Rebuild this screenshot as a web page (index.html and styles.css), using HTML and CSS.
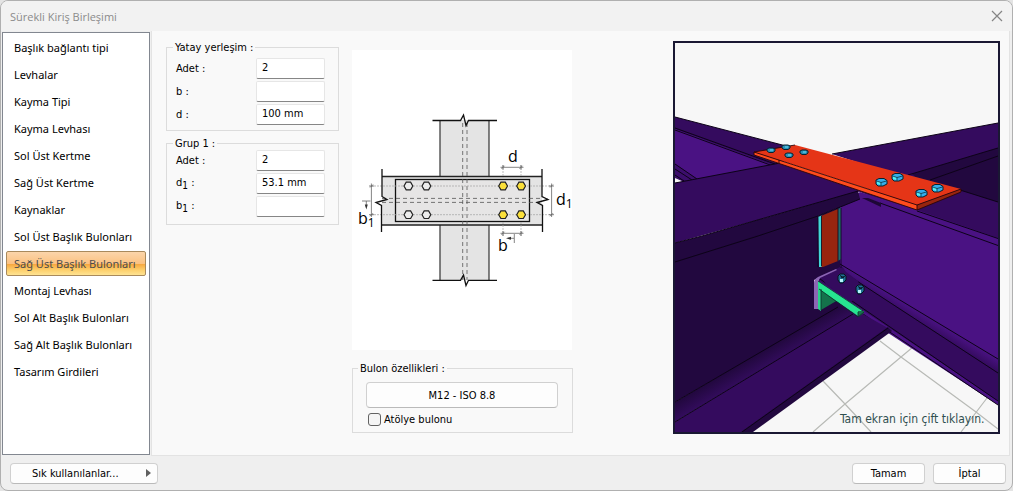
FILE: index.html
```html
<!DOCTYPE html>
<html lang="tr">
<head>
<meta charset="UTF-8" />
<meta name="viewport" content="width=device-width, initial-scale=1" />
<title>Sürekli Kiriş Birleşimi</title>
<link rel="stylesheet" href="styles.css">
</head>
<body>
<div class="dialog">
  <header class="titlebar">
    <h1>Sürekli Kiriş Birleşimi</h1>
    <button type="button" class="close" aria-label="Kapat">
      <svg width="12" height="12" viewBox="0 0 12 12"><path d="M1 1L11 11M11 1L1 11" fill="none" stroke="#858585" stroke-width="1.2"/></svg>
    </button>
  </header>

  <div class="content">
    <nav class="sidebar">
      <button type="button">Başlık bağlantı tipi</button>
      <button type="button">Levhalar</button>
      <button type="button">Kayma Tipi</button>
      <button type="button">Kayma Levhası</button>
      <button type="button">Sol Üst Kertme</button>
      <button type="button">Sağ Üst Kertme</button>
      <button type="button">Kaynaklar</button>
      <button type="button">Sol Üst Başlık Bulonları</button>
      <button type="button" class="active">Sağ Üst Başlık Bulonları</button>
      <button type="button">Montaj Levhası</button>
      <button type="button">Sol Alt Başlık Bulonları</button>
      <button type="button">Sağ Alt Başlık Bulonları</button>
      <button type="button">Tasarım Girdileri</button>
    </nav>

    <main class="panel">
      <form class="fields">
        <fieldset>
          <legend>Yatay yerleşim :</legend>
          <div class="rows">
            <label for="h-count">Adet :</label>
            <input type="text" id="h-count" value="2" />
            <label for="h-b">b :</label>
            <input type="text" id="h-b" value="" />
            <label for="h-d">d :</label>
            <input type="text" id="h-d" value="100 mm" />
          </div>
        </fieldset>
        <fieldset class="tight">
          <legend>Grup 1 :</legend>
          <div class="rows">
            <label for="g-count">Adet :</label>
            <input type="text" id="g-count" value="2" />
            <label for="g-d1">d<sub>1</sub> :</label>
            <input type="text" id="g-d1" value="53.1 mm" />
            <label for="g-b1">b<sub>1</sub> :</label>
            <input type="text" id="g-b1" value="" />
          </div>
        </fieldset>
      </form>

      <div class="middle">
        <svg class="diagram" viewBox="0 0 220 300">
          <!-- column and beam -->
          <rect x="88" y="70" width="49" height="160" fill="#e4e4e4"/>
          <path d="M88 70V230M137 70V230" stroke="#333" stroke-width="1.2"/>
          <rect x="30" y="126" width="160" height="49" fill="#e4e4e4"/>
          <path d="M30 126.5H190M30 175H190" stroke="#222" stroke-width="1.3"/>
          <rect x="43.5" y="129.5" width="134" height="42" fill="#e6e5e5" stroke="#111" stroke-width="1.3"/>
          <!-- hidden edges -->
          <g stroke="#555" stroke-width="0.8" stroke-dasharray="4 3">
            <path d="M110.7 73V230M115 73V230M30 148.4H190M30 152.4H190"/>
          </g>
          <g stroke="#aaa" stroke-width="0.8" stroke-dasharray="2 1">
            <path d="M19 136H200M19 164.7H200M151 115V128M169 115V128M151 172V186M169 172V186"/>
          </g>
          <!-- break lines -->
          <g fill="none" stroke="#111" stroke-width="1.3">
            <path d="M80.5 70.5H108.5L111.5 65L114 75.5L116.5 70.5H145"/>
            <path d="M80.5 230.3H108.5L111.5 225L114 235.5L116.5 230.3H145"/>
            <path d="M30 119V146.5L35 149.5L24 152.5L29.5 155.5V182"/>
            <path d="M190 119V146.5L196 149.5L185 152.5L190.5 155.5V182"/>
          </g>
          <!-- bolts -->
          <g fill="#ededed" stroke="#222" stroke-width="1.2">
            <path id="bolt" d="M52 136L54.2 132.2H58.6L60.8 136L58.6 139.8H54.2Z"/>
            <use href="#bolt" x="18"/>
            <use href="#bolt" y="28.7"/>
            <use href="#bolt" x="18" y="28.7"/>
          </g>
          <g fill="#fbe03a" stroke="#222" stroke-width="1.2">
            <path id="bolt-on" d="M146.7 136L148.9 132.2H153.3L155.5 136L153.3 139.8H148.9Z"/>
            <use href="#bolt-on" x="18"/>
            <use href="#bolt-on" y="28.7"/>
            <use href="#bolt-on" x="18" y="28.7"/>
          </g>
          <!-- dimensions -->
          <g fill="none" stroke="#666" stroke-width="0.8">
            <path d="M148.5 117.3H171.5M151 115V119.5M169 115V119.5M149.5 118.8L152.5 115.8M167.5 118.8L170.5 115.8"/>
            <path d="M148.5 183.3H171.5M151 181V186M169 181V186M149.5 184.8L152.5 181.8M167.5 184.8L170.5 181.8"/>
            <path d="M19.4 133.5V167M17 136H22M17 164.7H22M18 137.5L21 134.5M18 166.2L21 163.2"/>
            <path d="M199.6 133.5V167M197 136H202M197 164.7H202M198 137.5L201 134.5M198 166.2L201 163.2"/>
            <path d="M10 151H18.5M14.3 151V157M162.3 184V193M162 188.3H157"/>
          </g>
          <path d="M12.8 154.5H15.8L14.3 159.5ZM159 186.8V189.8L154 188.3Z" fill="#333"/>
          <text x="156" y="112">d</text>
          <text x="204" y="155">d<tspan class="index" dy="3">1</tspan></text>
          <text x="6" y="174">b<tspan class="index" dy="3">1</tspan></text>
          <text x="146" y="201">b</text>
        </svg>

        <fieldset class="bolt-props">
          <legend>Bulon özellikleri :</legend>
          <button type="button" class="btn wide">M12 - ISO 8.8</button>
          <label class="check"><input type="checkbox" />Atölye bulonu</label>
        </fieldset>
      </div>

      <div class="preview">
        <svg viewBox="675 43 323 389">
          <defs>
            <linearGradient id="fillet-left" gradientUnits="userSpaceOnUse" x1="750" y1="359" x2="760" y2="376">
              <stop offset="0" stop-color="#22083f"/>
              <stop offset="1" stop-color="#370d64"/>
            </linearGradient>
            <linearGradient id="fillet-right" gradientUnits="userSpaceOnUse" x1="932" y1="319" x2="926" y2="329">
              <stop offset="0" stop-color="#4a1283"/>
              <stop offset="1" stop-color="#340b5e"/>
            </linearGradient>
          </defs>
          <rect x="675" y="43" width="323" height="389" fill="#f7f7f7"/>

          <!-- floor grid -->
          <path d="M880 341L901 357L976 412L998 429M823 381L845 404L871 432M913 347L901 357L845 404L813 432M987 398L961 432" fill="none" stroke="#b8bab6" stroke-width="1.2"/>

          <!-- far left beam -->
          <path d="M675 117L790 147L780 170L675 183Z" fill="#340b5e"/>
          <path d="M675 129L773 165L697 179L675 164Z" fill="#4a1283"/>
          <path d="M675 164L697 179L690 181L675 178Z" fill="#3c0e6c"/>
          <path d="M675 178L683 181.5L675 183Z" fill="#f7f7f7"/>
          <path d="M675 117L790 147M675 128L775 164M675 130L773 166M675 164L697 179M675 169L692 180M675 175L684 181" fill="none" stroke="#0d0318"/>

          <!-- far right beam -->
          <path d="M832 154L998 123V150L912 180Z" fill="#340b5e"/>
          <path d="M912 174L998 148V204L930 190Z" fill="#22083f"/>
          <path d="M832 154L998 123M908 175L998 148M930 180L998 156" fill="none" stroke="#0d0318"/>

          <!-- near right beam -->
          <path d="M816 280L850 300L892 331L888 329L835 320Z" fill="#2b094e"/>
          <path d="M855 190L960 190L998 202V240L917 215Z" fill="#340b5e"/>
          <path d="M837 205L860 192L917 210L998 238V375L837 268Z" fill="#4a1283"/>
          <path d="M840 264L998 359V374L837 269Z" fill="url(#fillet-right)"/>
          <path d="M837 268L998 373V402L863 311L818 282L820 276Z" fill="#340b5e"/>
          <path d="M818 280L998 401V405L850 308Z" fill="#4a1283"/>
          <path d="M960 190L998 202M917 211L998 238.5M880 203L998 245.5M840 264L998 359M837 268L998 373M820 279L998 401M863 314L998 405" fill="none" stroke="#0d0318"/>
          <path d="M862 198L881 207V203L868 198Z" fill="#1d0736"/>

          <!-- near left beam -->
          <path d="M675 183L780 163L863 190L858 192L675 243Z" fill="#340b5e"/>
          <path d="M675 243L702 236L858 191L860 199L818 216V232L675 264Z" fill="#22083f"/>
          <path d="M675 262L818 216L840 207V268L814 280V300L840 300V307L675 402Z" fill="#22083f"/>
          <path d="M820 276L838 268L842 266L846 272L858 281L862 296L850 302L826 284Z" fill="#340b5e"/>
          <path d="M675 402L840 305L853 314L675 422Z" fill="url(#fillet-left)"/>
          <path d="M675 422L853 313L861 313L888 328L742 432H675Z" fill="#340b5e"/>
          <path d="M888 327L892 331L753 432H741Z" fill="#22083f"/>
          <path d="M675 183L780 163M675 243L702 236L858 191M675 262L758 236L818 216L860 199M675 402L838 307M675 422L853 314M742 432L888 328" fill="none" stroke="#0d0318"/>

          <!-- web plate -->
          <path d="M821 216L838 209V261L823 267H821Z" fill="#98250f"/>
          <path d="M818 217L821.5 215.5V267H819Z" fill="#42d8d8"/>
          <path d="M838 209L841 207.5V259L838 261Z" fill="#236b6e"/>
          <path d="M821.5 216V266M838 209V261M818 217V267M841 208V268" stroke="#0d0318" stroke-width="0.8"/>

          <!-- seat bracket -->
          <path d="M814 309V283Q814 279 818 277L836 269L837 270L820 278Q818 280 818 283V309Z" fill="#8c66b4"/>
          <path d="M820 284L838 300L821 310Z" fill="#14724b"/>
          <path d="M818 282L821 283V311L818 309Z" fill="#2bd08a"/>
          <path d="M818 281L862 310L858 316L819 289Z" fill="#27e491"/>
          <path d="M858 311L864 311L864 313L858 317Z" fill="#15724c"/>
          <path d="M818 281L863 311M819 289L858 317L864 312M821 289V310M858 312V316" fill="none" stroke="#0b2c28" stroke-width="0.8"/>

          <!-- top plate -->
          <path d="M754 152L795 145L961 189L917 205Z" fill="#e53517"/>
          <path d="M754 152L917 205V210L754 155Z" fill="#ff4c1c"/>
          <path d="M917 205L961 189V192L917 210Z" fill="#98250f"/>
          <path d="M754 152L917 205L961 189V192L917 210L754 155ZM917 205V210M754 152L795 145M779 160V163" fill="none" stroke="#2b0608" stroke-width="0.9"/>

          <!-- bolt heads -->
          <g stroke="#07222e">
            <g id="head">
              <path d="M876 180L879 178.5H884L887 180.5V184L883 186H878L876 184Z" fill="#35aeea" stroke-width="1"/>
              <path d="M877 181L880.5 182.5V185L877 184Z" fill="#50f4f4" stroke="none"/>
              <path d="M876.5 181L881 182.5L886.5 181M881 182.5V185.5" fill="none" stroke-width="0.7"/>
            </g>
            <use href="#head" x="16" y="-5"/>
            <use href="#head" x="40" y="11"/>
            <use href="#head" x="56" y="6"/>
          </g>
          <g stroke="#07222e">
            <g id="head-far">
              <path d="M767 149L769 148H773L775 149V151L773 152.5H769L767 151Z" fill="#2a8fb8"/>
              <path d="M770 150H773" stroke="#6ce4f4"/>
            </g>
            <use href="#head-far" x="15" y="-3"/>
            <use href="#head-far" x="18" y="5"/>
            <use href="#head-far" x="33" y="2"/>
          </g>
          <g id="nut">
            <path d="M838 276L840 274H844L846 276V280L843 283H840L838 280Z" fill="#1f6f94" stroke="#06141e"/>
            <path d="M840 279H843V282H840Z" fill="#b8f6fb"/>
            <path d="M840 275.5L844 278M845 276L841 278" stroke="#06141e"/>
          </g>
          <use href="#nut" x="18" y="11"/>

          <text x="840" y="423">Tam ekran için çift tıklayın.</text>
        </svg>
      </div>
    </main>
  </div>

  <footer class="footer">
    <button type="button" class="btn favorites"><span>Sık kullanılanlar...</span>
      <svg width="5" height="8" viewBox="0 0 5 8"><path d="M0 0L5 4L0 8Z" fill="#606060"/></svg>
    </button>
    <button type="button" class="btn">Tamam</button>
    <button type="button" class="btn">İptal</button>
  </footer>
</div>
</body>
</html>
```
FILE: styles.css
```css
* {
  box-sizing: border-box;
}
body {
  margin: 0;
  background: #e4e4e4;
  font-family: "DejaVu Sans Condensed", "Noto Sans", sans-serif;
  font-size: 11px;
  color: #000;
}
button, input {
  font: inherit;
  color: inherit;
}
.dialog {
  display: flex;
  flex-direction: column;
  min-height: 100vh;
  border: 1px solid #b0b0b0;
  border-radius: 8px;
  background: #efefef;
  overflow: hidden;
}
.titlebar {
  display: flex;
  align-items: center;
  justify-content: space-between;
  height: 30px;
  padding: 0 8px 0 9px;
  background: #f2f2f2;
}
.titlebar h1 {
  margin: 0;
  font-family: "Open Sans", sans-serif;
  font-size: 11px;
  font-weight: normal;
  color: #8b8b8b;
}
.close {
  display: flex;
  padding: 1px;
  border: none;
  background: none;
}
.content {
  display: flex;
  flex: 1;
  padding: 0 2px 0 1px;
}
.sidebar {
  display: flex;
  flex-direction: column;
  gap: 2px;
  width: 148px;
  margin: 1px 1px 1px 0;
  padding: 2px 3px;
  border: 1px solid #828790;
  background: #fff;
}
.sidebar button {
  height: 25px;
  padding: 0 7px;
  border: 1px solid transparent;
  border-radius: 2px;
  background: none;
  font-family: "Noto Sans", sans-serif;
  text-align: left;
  white-space: nowrap;
}
.sidebar .active {
  border-color: #a98a5c;
  background: linear-gradient(#fbd5aa 0%, #fbc282 50%, #f7a941 54%, #fdd16f 80%, #fee392 100%);
  color: #4d4d4d;
}
.panel {
  display: flex;
  align-items: flex-start;
  flex: 1;
  padding: 10px 9px 10px 14px;
  border: 1px solid #e3e3e3;
  border-top: none;
  background: #f9f9f9;
}
fieldset {
  min-width: 0;
  margin: 0;
  padding: 4px 13px 5px 9px;
  border: 1px solid #dcdcdc;
}
legend {
  height: 13px;
  margin-left: -3px;
  padding: 0 2px;
  line-height: 13px;
}
.fields {
  display: flex;
  flex-direction: column;
  gap: 6px;
  width: 173px;
}
.fields .tight {
  padding-top: 0;
  padding-bottom: 7px;
}
.rows {
  display: grid;
  grid-template-columns: 1fr 69px;
  gap: 2px 0;
  align-items: center;
}
.rows input {
  width: 100%;
  height: 21px;
  padding: 0 5px 2px;
  border: 1px solid #e6e6e6;
  border-bottom-color: #868686;
  border-radius: 2px;
  background: #fff;
}
sub {
  font-size: 10px;
  line-height: 1;
}
.middle {
  width: 221px;
  margin-top: 9px;
  margin-left: 13px;
}
.diagram {
  display: block;
  width: 220px;
  background: #fff;
}
.diagram text {
  font-family: "Open Sans", sans-serif;
  font-size: 16px;
}
.diagram .index {
  font-size: 12px;
}
.bolt-props {
  margin-top: 12px;
  padding: 7px 14px 6px 13px;
}
.bolt-props legend {
  margin-left: -8px;
}
.btn {
  height: 21px;
  min-width: 73px;
  padding: 0 8px;
  border: 1px solid #d0d0d0;
  border-bottom-color: #bababa;
  border-radius: 4px;
  background: #fdfdfd;
}
.wide {
  display: block;
  width: 100%;
  height: 26px;
}
.check {
  display: flex;
  align-items: center;
  gap: 3px;
  margin-top: 5px;
  padding-left: 2px;
}
.check input {
  appearance: none;
  width: 13px;
  height: 13px;
  margin: 0;
  border: 1px solid #626262;
  border-radius: 3px;
  background: #f5f5f5;
}
.check input:checked {
  background: #626262;
}
.preview {
  flex: 1;
  margin-left: 100px;
  border: 2px solid #1a1833;
}
.preview svg {
  display: block;
  width: 100%;
}
.preview text {
  font-size: 12px;
  fill: #2f4f4f;
}
.footer {
  display: flex;
  align-items: center;
  gap: 8px;
  height: 34px;
  padding: 0 6px 0 9px;
}
.favorites {
  display: flex;
  align-items: center;
  justify-content: space-between;
  width: 148px;
  margin-right: auto;
  padding: 0 6px 0 21px;
}
```
